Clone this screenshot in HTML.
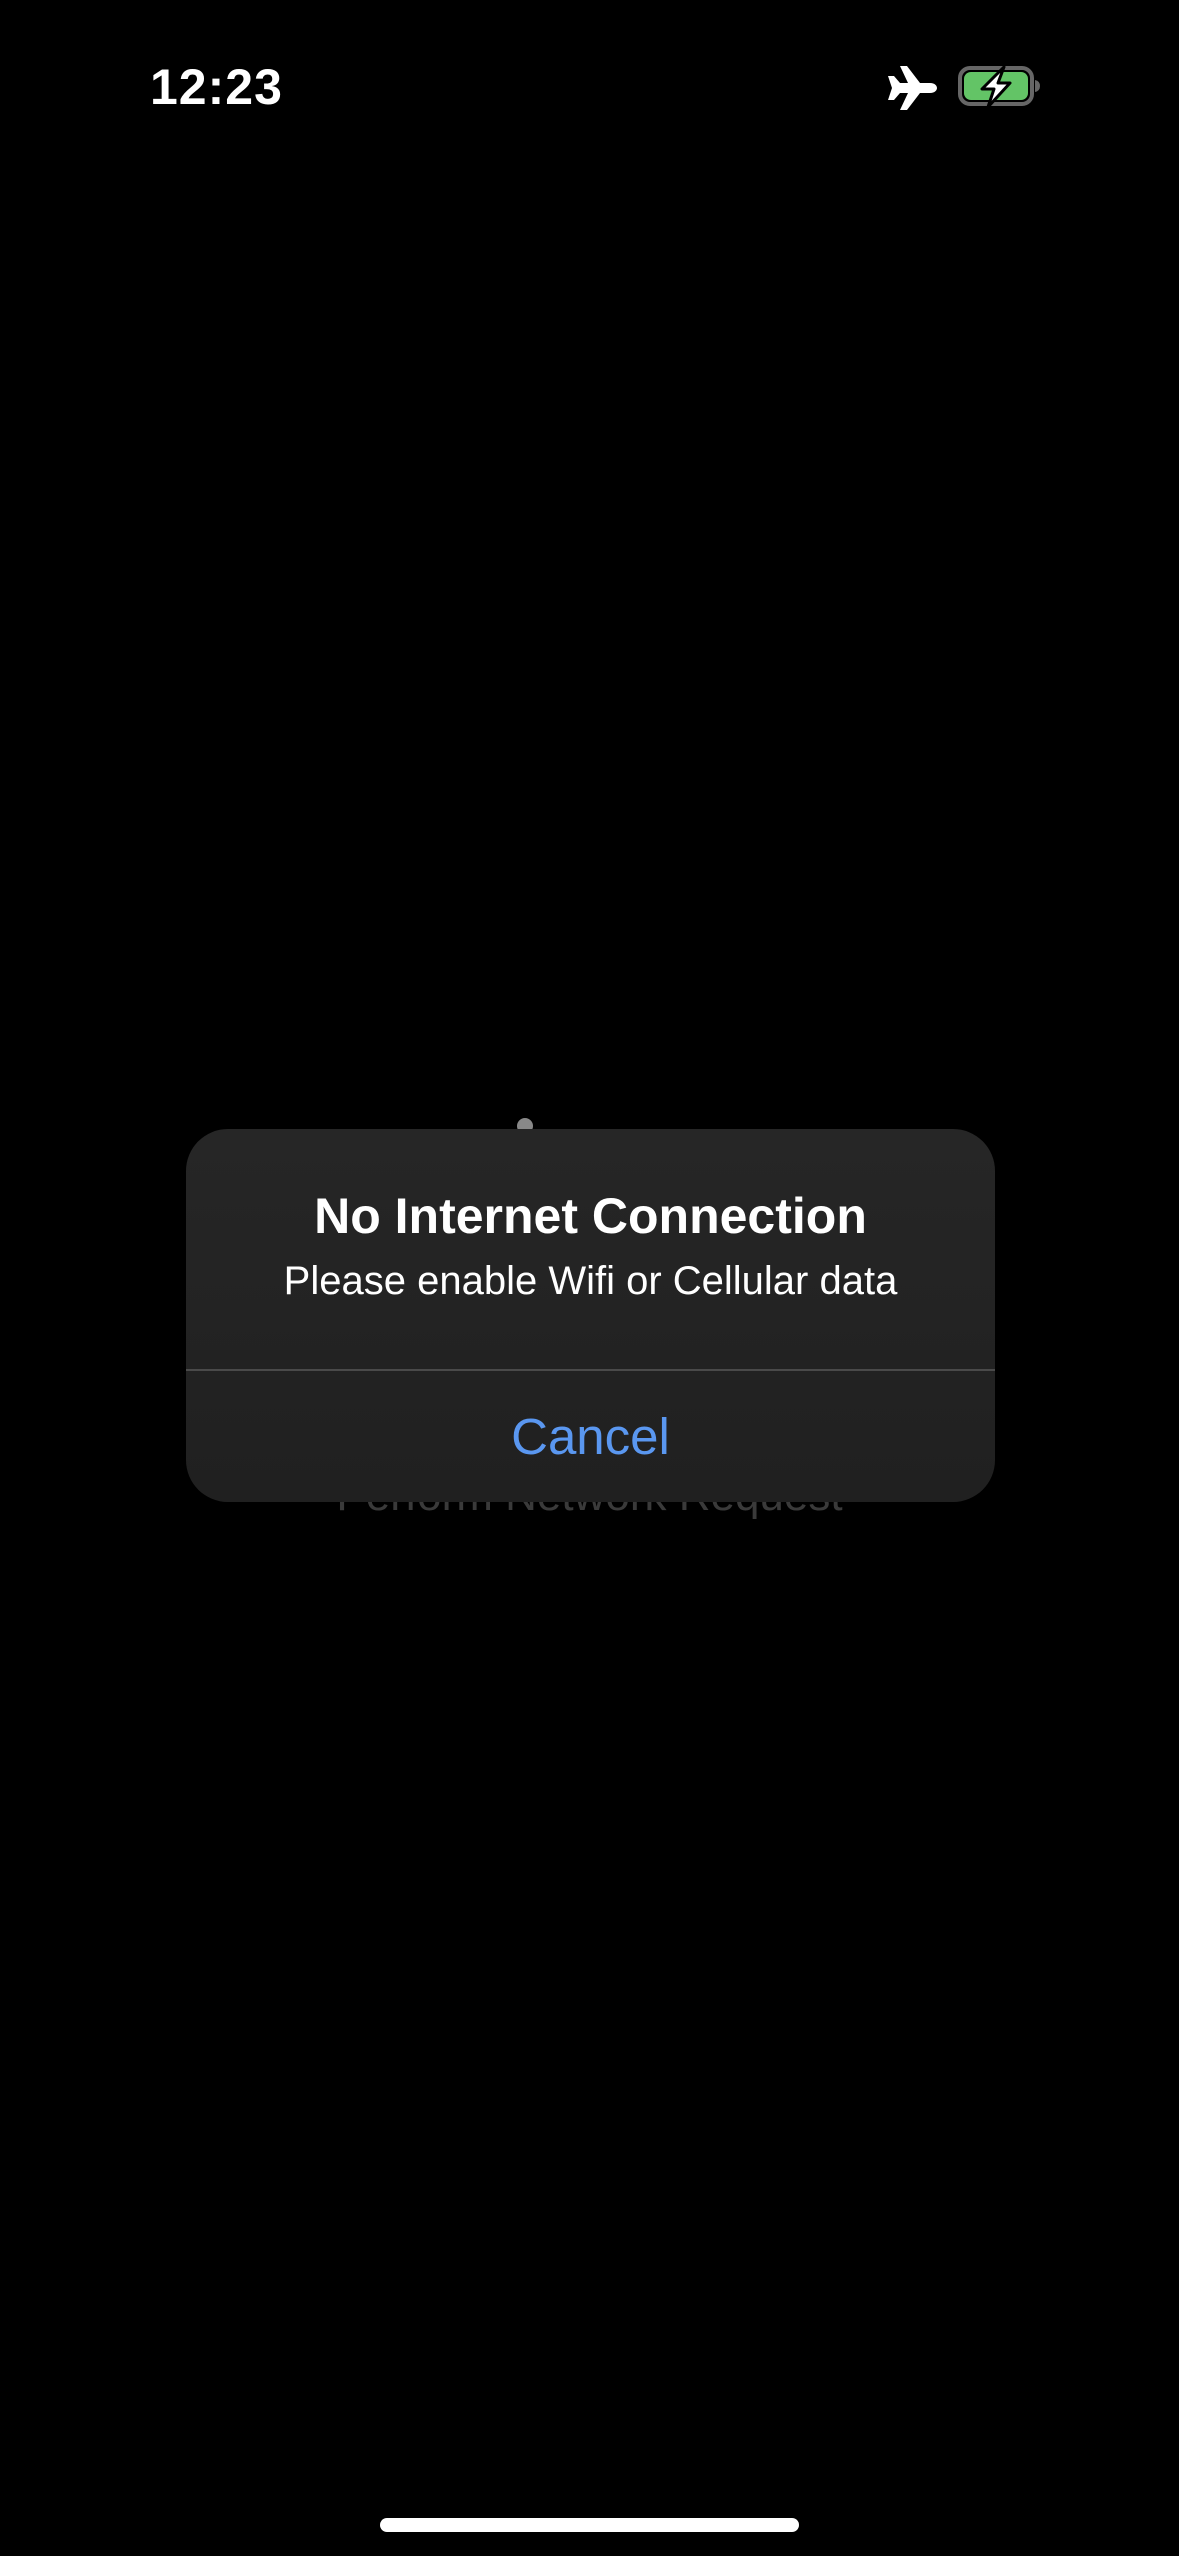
<!DOCTYPE html>
<html><head><meta charset="utf-8"><style>
html,body{margin:0;padding:0;background:#000;}
body{width:1179px;height:2556px;position:relative;overflow:hidden;font-family:"Liberation Sans",sans-serif;}
.time{position:absolute;left:150px;top:58px;font-size:50px;font-weight:bold;color:#fff;letter-spacing:1px;}
.ghost{position:absolute;left:0;width:1179px;top:1474px;line-height:1;text-align:center;font-size:44px;color:#3a3a3a;}
.alert{position:absolute;left:186px;top:1129px;width:809px;height:373px;border-radius:42px;background:linear-gradient(180deg,#262626,#202020);overflow:hidden;}
.title{position:absolute;top:58px;width:100%;text-align:center;font-size:50px;font-weight:bold;color:#fff;}
.msg{position:absolute;top:130px;width:100%;text-align:center;font-size:40px;color:#fff;}
.div{position:absolute;top:240px;left:0;width:100%;height:2px;background:#4a4a4a;}
.cancel{position:absolute;top:278px;width:100%;text-align:center;font-size:51px;color:#5a97f0;}
.home{position:absolute;left:380px;top:2518px;width:419px;height:14px;border-radius:7px;background:#fff;}
</style></head><body>
<div class="time">12:23</div>
<svg style="position:absolute;left:886px;top:66px" width="52" height="44" viewBox="0 0 52 44">
<path fill="#fff" d="M2 10 L8 10 L14 17 L22 17 L14 0 L21 0 L34 17 L44 17 C49 17 51 20 51 22 C51 24 49 27 44 27 L34 27 L21 44 L14 44 L22 27 L14 27 L8 34 L2 34 L6 22 Z"/>
</svg>
<svg style="position:absolute;left:958px;top:66px" width="86" height="42" viewBox="0 0 86 42">
<rect x="2" y="2" width="72" height="36" rx="10" fill="none" stroke="#666" stroke-width="4"/>
<rect x="6" y="6" width="64" height="28" rx="7" fill="#63c466"/>
<path d="M77 14 Q82 15 82 20 Q82 25 77 26 Z" fill="#666"/>
<path d="M46 1 L24 23 L36 23 L30 41 L52 17 L40 17 Z" fill="#fff" stroke="#000" stroke-width="3" stroke-linejoin="round"/>
</svg>
<div style="position:absolute;left:517px;top:1118px;width:16px;height:16px;border-radius:50%;background:#888;"></div>
<div class="ghost">Perform Network Request</div>
<div class="alert">
<div class="title">No Internet Connection</div>
<div class="msg">Please enable Wifi or Cellular data</div>
<div class="div"></div>
<div class="cancel">Cancel</div>
</div>
<div class="home"></div>
</body></html>
